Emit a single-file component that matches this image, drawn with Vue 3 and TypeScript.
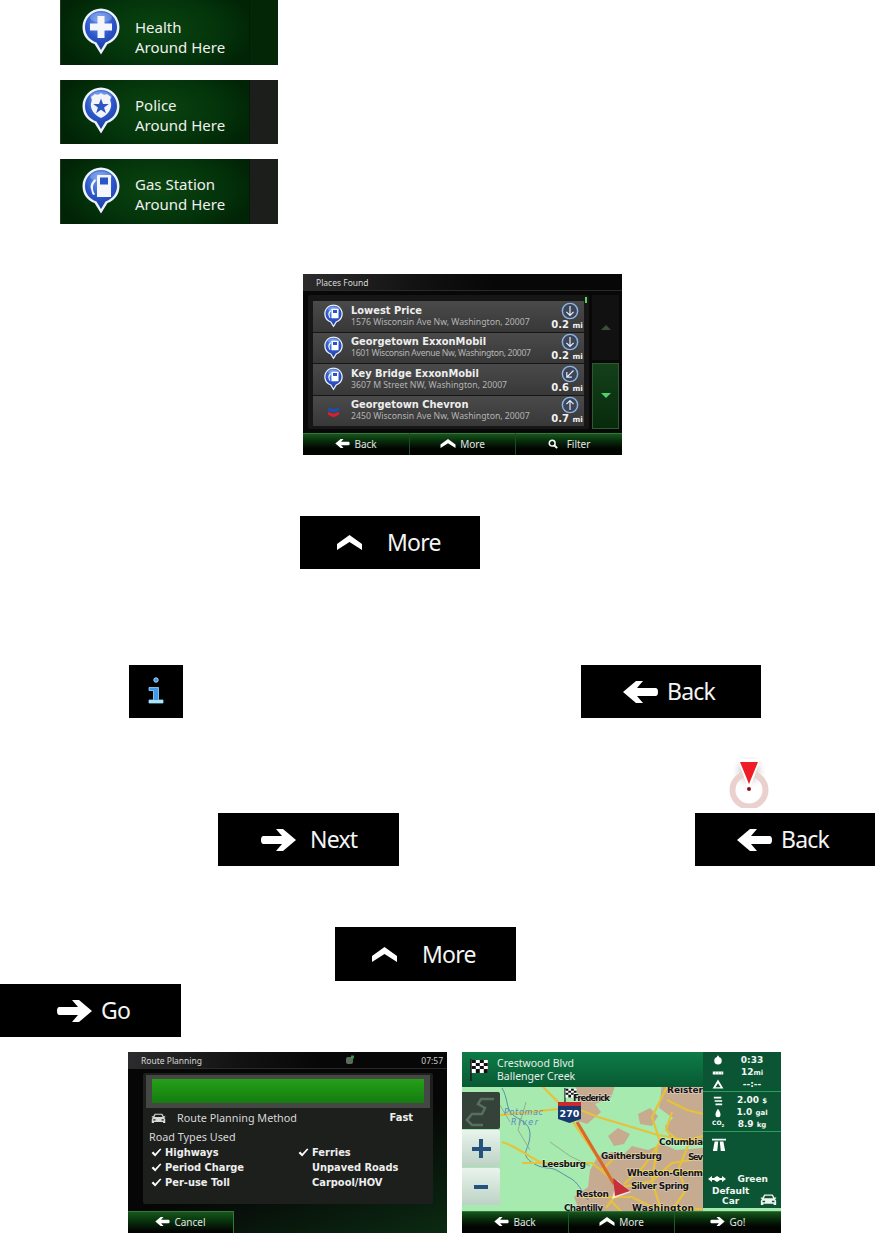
<script setup lang="ts">
interface Category {
  name: string
  glyph: 'health' | 'police' | 'gas'
  flat: boolean
}

interface Place {
  name: string
  address: string
  distance: string
  turn: number
  brand?: boolean
  tight?: boolean
}

const categories: Category[] = [
  { name: 'Health', glyph: 'health', flat: false },
  { name: 'Police', glyph: 'police', flat: true },
  { name: 'Gas Station', glyph: 'gas', flat: true }
]

const places: Place[] = [
  { name: 'Lowest Price', address: '1576 Wisconsin Ave Nw, Washington, 20007', distance: '0.2', turn: 180 },
  { name: 'Georgetown ExxonMobil', address: '1601 Wisconsin Avenue Nw, Washington, 20007', distance: '0.2', turn: 180, tight: true },
  { name: 'Key Bridge ExxonMobil', address: '3607 M Street NW, Washington, 20007', distance: '0.6', turn: 225 },
  { name: 'Georgetown Chevron', address: '2450 Wisconsin Ave Nw, Washington, 20007', distance: '0.7', turn: 0, brand: true }
]

const roadsLeft = [
  { label: 'Highways', on: true },
  { label: 'Period Charge', on: true },
  { label: 'Per-use Toll', on: true }
]

const roadsRight = [
  { label: 'Ferries', on: true },
  { label: 'Unpaved Roads', on: false },
  { label: 'Carpool/HOV', on: false }
]

const mapLabels = [
  { text: 'Frederick', x: 111, y: 49, w: 37 },
  { text: 'Reister', x: 205, y: 41, w: 36 },
  { text: 'Columbia', x: 197, y: 93, w: 44 },
  { text: 'Gaithersburg', x: 139, y: 107, w: 61 },
  { text: 'Sev', x: 226, y: 108, w: 15 },
  { text: 'Leesburg', x: 80, y: 115, w: 44 },
  { text: 'Wheaton-Glenm', x: 165, y: 124, w: 76 },
  { text: 'Silver Spring', x: 169, y: 137, w: 58 },
  { text: 'Reston', x: 114, y: 145, w: 33 },
  { text: 'Chantilly', x: 102, y: 159, w: 39 },
  { text: 'Washington', x: 170, y: 159, w: 62 }
]
</script>

<template>
  <div class="page">
    <svg class="defs" width="0" height="0" aria-hidden="true">
      <defs>
        <radialGradient id="pinBlue" cx="45%" cy="25%" r="80%">
          <stop offset="0" stop-color="#6a9af0" />
          <stop offset="0.55" stop-color="#2b55c8" />
          <stop offset="1" stop-color="#1b3a9e" />
        </radialGradient>
        <symbol id="pin" viewBox="0 0 38 47">
          <path d="M19 0.500C9 0.500 0.500 9 0.500 19c0 8.500 5 14.500 12 17l6.500 10.500L25.500 36c7-2.500 12-8.500 12-17C37.500 9 29 0.500 19 0.500z" fill="#eef3fb" />
          <path d="M19 3C10 3 3 10 3 19c0 7.500 4.500 13 11.500 15.500L19 42l4.500-7.500C30.500 32 35 26.500 35 19 35 10 28 3 19 3z" fill="url(#pinBlue)" />
          <ellipse cx="19" cy="9.500" rx="11" ry="5" fill="#fff" opacity="0.22" />
        </symbol>
        <symbol id="arrow-left" viewBox="0 0 35 22">
          <path d="M0 11 13 0h7l-6 7h18.500Q35 7 35 11t-2.500 4H14l6 7h-7z" fill="currentColor" />
        </symbol>
        <symbol id="arrow-right" viewBox="0 0 35 22">
          <path d="M35 11 22 0h-7l6 7H2.500Q0 7 0 11t2.500 4H21l-6 7h7z" fill="currentColor" />
        </symbol>
        <symbol id="chevron-up" viewBox="0 0 25 15">
          <path d="M12.500 0 25 9v6L12.500 7 0 15V9z" fill="currentColor" />
        </symbol>
        <symbol id="check" viewBox="0 0 12 10">
          <path d="M0.500 5.500 2.500 4 4.500 6.500 10 0.500 11.500 1.500 4.500 9.500z" fill="currentColor" />
        </symbol>
        <symbol id="car" viewBox="0 0 20 14">
          <path d="M1 4h2l2-3.500h10L17 4h2v1.500h-1.500L19 8v5h-3v-1.500H4V13H1V8l1.500-2.500H1zM6 2 4.500 5h11L14 2zM3 8v1.500h3V8zm11 0v1.500h3V8z" fill="currentColor" fill-rule="evenodd" />
        </symbol>
        <symbol id="flag" viewBox="0 0 18 22">
          <rect x="0" y="0" width="1.800" height="22" fill="#222" />
          <rect x="1.800" y="1" width="16" height="13" fill="#fff" />
          <path d="M1.800 1h4v3h-4zM9.800 1h4v3h-4zM5.800 4h4v3h-4zM13.800 4h4v3h-4zM1.800 7h4v3h-4zM9.800 7h4v3h-4zM5.800 10h4v4h-4zM13.800 10h4v4h-4z" fill="#111" />
        </symbol>
        <symbol id="pump" viewBox="0 0 38 47">
          <use href="#pin" />
          <path d="M16 9h12a1 1 0 0 1 1 1v18H15V10a1 1 0 0 1 1-1z" fill="#fff" />
          <rect x="18" y="11.500" width="8" height="6" fill="#2b55c4" />
          <path d="M13 12c-4 3-5 7-4 10s1 5 3 5l1-1c-2-2-2-4-2-6s1-4 3-6z" fill="#fff" />
        </symbol>
      </defs>
    </svg>

    <section class="category-list">
      <div v-for="c in categories" :key="c.name" class="category" :class="{ flat: c.flat }">
        <svg class="category-pin" viewBox="0 0 38 47">
          <use href="#pin" />
          <path v-if="c.glyph === 'health'" d="M15.500 8h7v7.500H30v7h-7.500V30h-7v-7.500H8v-7h7.500z" fill="#f4f6fb" />
          <g v-else-if="c.glyph === 'police'">
            <path d="M19 6c2 2 4 2 6 1l4 3c-1 2-1 4 0 6 1 6-3 12-10 15C12 28 8 22 9 16c1-2 1-4 0-6l4-3c2 1 4 1 6-1z" fill="#f2f4fa" />
            <path d="M19 11.500l2 5.500 5.800 0-4.700 3.500 1.800 5.700-4.900-3.500-4.900 3.500 1.800-5.700-4.700-3.500 5.800 0z" fill="#2b55c4" />
          </g>
          <g v-else>
            <path d="M16 8h12a1 1 0 0 1 1 1v21H15V9a1 1 0 0 1 1-1z" fill="#f4f6fb" />
            <rect x="18" y="10.500" width="8" height="7" fill="#2b55c4" />
            <path d="M13 12c-4 3-5 7-4 10s1 6 3 6l1-1c-2-2-2-5-2-7s1-4 3-6z" fill="#f4f6fb" />
          </g>
        </svg>
        <div class="category-text">
          <span>{{ c.name }}</span>
          <span>Around Here</span>
        </div>
        <div class="category-side"></div>
      </div>
    </section>

    <!-- Places Found screen -->
    <section class="screen places">
      <header class="screen-title"><span>Places Found</span></header>
      <div class="places-body">
        <div class="place-list">
          <div v-for="p in places" :key="p.name" class="place">
            <svg v-if="p.brand" class="place-icon" viewBox="0 0 38 47">
              <path d="M8 16l11 4 11-4v7l-11 4-11-4z" fill="#1d4fa8" />
              <path d="M8 25l11 4 11-4v6l-11 5-11-5z" fill="#d3212d" />
            </svg>
            <svg v-else class="place-icon" viewBox="0 0 38 47"><use href="#pump" /></svg>
            <div class="place-text">
              <div class="place-name">{{ p.name }}</div>
              <div class="place-address" :class="{ tight: p.tight }">{{ p.address }}</div>
            </div>
            <div class="place-side">
              <svg class="turn" viewBox="0 0 20 20" :style="{ transform: `rotate(${p.turn}deg)` }">
                <circle cx="10" cy="10" r="8.500" fill="#3c4658" stroke="#8fb4e8" stroke-width="1.600" />
                <path d="M10 15.500V5M6 9l4-4 4 4" fill="none" stroke="#e8eef8" stroke-width="1.300" />
              </svg>
              <div class="place-dist">{{ p.distance }} <small>mi</small></div>
            </div>
          </div>
          <i class="scroll-mark"></i>
        </div>
        <div class="scroller">
          <div class="scroll-btn"><i class="tri up"></i></div>
          <div class="scroll-btn active"><i class="tri down"></i></div>
        </div>
      </div>
      <footer class="toolbar">
        <div class="tool">
          <svg class="tool-arrow"><use href="#arrow-left" /></svg>Back
        </div>
        <div class="tool">
          <svg class="tool-chevron"><use href="#chevron-up" /></svg>More
        </div>
        <div class="tool">
          <svg class="tool-search" viewBox="0 0 12 12">
            <circle cx="5" cy="5" r="3.500" fill="none" stroke="currentColor" stroke-width="1.800" />
            <path d="M7.500 7.500 11 11" stroke="currentColor" stroke-width="2.200" />
          </svg>Filter
        </div>
      </footer>
    </section>

    <div class="btn btn-more more-a">
      <svg class="chevron"><use href="#chevron-up" /></svg><span>More</span>
    </div>

    <div class="row row-info">
      <div class="info-btn">
        <svg viewBox="0 0 54 53" width="54" height="53">
          <circle cx="27" cy="15" r="2.200" fill="#3f8fe0" stroke="#b4d8f6" stroke-width="1" />
          <path d="M20 22.500h9.500V35H34v3H20v-3h4.500V25.500H20z" fill="#3e9bec" stroke="#a6d4f7" stroke-width="0.800" />
          <path d="M20 35h14v3H20z" fill="#a8e6fc" />
        </svg>
      </div>
      <div class="btn btn-back">
        <svg class="arrow"><use href="#arrow-left" /></svg><span>Back</span>
      </div>
    </div>

    <svg class="cursor-pin" viewBox="0 0 47 51" width="47" height="51">
      <defs>
        <radialGradient id="pinShade" cx="50%" cy="45%" r="50%">
          <stop offset="0" stop-color="#9a9a9a" />
          <stop offset="1" stop-color="#ffffff" stop-opacity="0" />
        </radialGradient>
      </defs>
      <ellipse cx="24" cy="16" rx="19" ry="19" fill="url(#pinShade)" />
      <circle cx="24" cy="33" r="16.500" fill="none" stroke="#ebd0d0" stroke-width="6" />
      <path d="M13 3.500Q13 2 15 2h18q2 0 2 1.500L25 31h-2z" fill="#fff" />
      <path d="M15 5h18L24 27z" fill="#ee1c25" />
      <circle cx="24" cy="32" r="2" fill="#8e1016" />
    </svg>

    <div class="row row-next">
      <div class="btn btn-next">
        <svg class="arrow"><use href="#arrow-right" /></svg><span>Next</span>
      </div>
      <div class="btn btn-back">
        <svg class="arrow"><use href="#arrow-left" /></svg><span>Back</span>
      </div>
    </div>

    <div class="btn btn-more more-b">
      <svg class="chevron"><use href="#chevron-up" /></svg><span>More</span>
    </div>

    <div class="btn btn-go">
      <svg class="arrow"><use href="#arrow-right" /></svg><span>Go</span>
    </div>

    <section class="screens">
      <!-- Route Planning screen -->
      <div class="screen route">
        <header class="screen-title route-title">
          <span>Route Planning</span>
          <svg class="sat" viewBox="0 0 10 10">
            <rect x="1" y="2" width="7" height="7" rx="2" fill="#5d6b5d" />
            <rect x="6" y="0.500" width="3" height="3" fill="#2f9a4a" />
          </svg>
          <span class="clock">07:57</span>
        </header>
        <div class="route-panel">
          <div class="progress"><div class="progress-bar"></div></div>
          <div class="method">
            <svg class="method-car"><use href="#car" /></svg>
            <span>Route Planning Method</span>
            <b>Fast</b>
          </div>
          <div class="road-heading">Road Types Used</div>
          <div class="road-grid">
            <ul>
              <li v-for="r in roadsLeft" :key="r.label">
                <svg v-if="r.on" class="tick"><use href="#check" /></svg>{{ r.label }}
              </li>
            </ul>
            <ul>
              <li v-for="r in roadsRight" :key="r.label">
                <svg v-if="r.on" class="tick"><use href="#check" /></svg>{{ r.label }}
              </li>
            </ul>
          </div>
        </div>
        <footer class="route-foot">
          <div class="tool cancel">
            <svg class="tool-arrow"><use href="#arrow-left" /></svg>Cancel
          </div>
        </footer>
      </div>

      <!-- Map screen -->
      <div class="screen map">
        <svg class="map-canvas" viewBox="0 0 319 181" width="319" height="181">
          <rect width="319" height="181" fill="#a6eab0" />
          <g fill="#c6ab90">
            <path d="M113 34h40l-4 12-16 6 6 8-14 12-12-4 6-14z" />
            <path d="M200 32h41v60l-14 2-10-8-8 2-6-14 8-8-14-10z" />
            <path d="M128 118l8-14 14-4 12 2 8-8 16 4 14-6 14 6 27-2v85H100l4-18 12-8-4-10 14-10z" />
            <path d="M146 84l10-8 12 6-6 10-10 2z" />
            <path d="M176 62l12-6 8 8-6 10-12-2z" />
          </g>
          <g fill="none" stroke="#5b8fa3" stroke-width="1">
            <path d="M40 36c6 10 4 20 10 26s18 8 18 20-6 16-4 22 14 12 22 12 14 6 22 10 12 14 18 22" />
          </g>
          <g fill="none" stroke="#8f9f86" stroke-width="0.800">
            <path d="M30 40 48 70M64 50l-8 28 12 20M88 90l20 14 20 10" />
          </g>
          <g fill="none" stroke="#e6c23a" stroke-width="2.200">
            <path d="M30 64l66-7 10-4 30 12 60 18 45 8" />
            <path d="M80 34l20 20 44 64 10 16" />
            <path d="M205 35l-15 30 8 25-16 24-20 18" />
            <path d="M60 111h70l30 24 30-6 20-18 31-5" />
            <path d="M120 145h50l20 10 50 2" />
            <path d="M205 48l20 10 16 4" />
            <path d="M195 95l-5 34 8 26" />
            <path d="M40 90c14 4 22 12 40 21" />
            <path d="M160 135l-16 21M177 119h64" />
            <path d="M210 60l-6 18 14 12 23-6M226 94l-10 24 8 20-14 20" />
            <path d="M148 148l12 12M140 118l14-14 30-2" />
          </g>
          <path d="M115 70l37 62" fill="none" stroke="#d9692a" stroke-width="3.200" />
          <path d="M155 128l-5 19 19-7z" fill="#fff" opacity="0.7" />
          <path d="M151 126l2 18 15-5z" fill="#c6303a" />
          <use href="#flag" x="101" y="36" width="15" height="15" />
          <path d="M96 50h23v17l-11.500 4L96 67z" fill="#17396f" />
          <rect x="96" y="50" width="23" height="4" fill="#c8282e" />
          <text x="107.500" y="65" class="shield-text">270</text>
          <text x="42" y="63" class="water" textLength="39">Potomac</text>
          <text x="49" y="73" class="water" textLength="27">River</text>
          <text
            v-for="l in mapLabels"
            :key="l.text"
            :x="l.x"
            :y="l.y"
            :textLength="l.w"
            class="town"
          >{{ l.text }}</text>
        </svg>

        <header class="map-header">
          <svg class="map-flag"><use href="#flag" /></svg>
          <div class="map-street">
            <span>Crestwood Blvd</span>
            <span>Ballenger Creek</span>
          </div>
        </header>

        <div class="map-controls">
          <div class="map-ctl dark">
            <svg viewBox="0 0 36 36" width="36" height="36">
              <path d="M31 6H18l-3 5 7 4-3 6H9l-5 6 5 5h11" fill="none" stroke="#56705e" stroke-width="2.500" />
            </svg>
          </div>
          <div class="map-ctl light"><i class="plus"></i></div>
          <div class="map-ctl light"><i class="minus"></i></div>
        </div>

        <aside class="map-side">
          <div class="side-block">
            <div class="stat">
              <svg viewBox="0 0 12 12"><circle cx="6" cy="7" r="4.500" fill="#fff" /><path d="M6 1v3" stroke="#fff" stroke-width="2" /></svg>
              <b>0:33</b>
            </div>
            <div class="stat">
              <svg viewBox="0 0 16 12"><path d="M1 4h14v4H1z" fill="#fff" /><path d="M4 6h1M8 6h1M12 6h1" stroke="#0b5535" /></svg>
              <b>12<small>mi</small></b>
            </div>
            <div class="stat">
              <svg viewBox="0 0 14 12"><path d="M7 0.500 13.500 11.500h-13z" fill="#fff" /><path d="M4 10l3-5 3 5z" fill="#0b5535" /></svg>
              <b>--:--</b>
            </div>
          </div>
          <div class="side-block">
            <div class="stat">
              <svg viewBox="0 0 14 12"><path d="M2 1h9v2H2zM3 5h9v2H3zM4 9h8v2H4z" fill="#fff" /></svg>
              <b>2.00 <small>$</small></b>
            </div>
            <div class="stat">
              <svg viewBox="0 0 12 12"><path d="M6 1c2 3 3 5 3 7a3 3 0 0 1-6 0c0-2 1-4 3-7z" fill="#fff" /></svg>
              <b>1.0 <small>gal</small></b>
            </div>
            <div class="stat">
              <span class="co2">CO<sub>2</sub></span>
              <b>8.9 <small>kg</small></b>
            </div>
          </div>
          <div class="side-block last">
            <svg class="highway" viewBox="0 0 16 16">
              <path d="M0 2h16v2H0z" fill="#fff" />
              <path d="M3 5h4v1L6 16H1zM9 5h4l2 11h-5L9 6z" fill="#fff" />
            </svg>
            <div class="eco">
              <svg viewBox="0 0 18 8"><path d="M0 4l4-3v2h2l3-2 3 2h2V1l4 3-4 3V5h-2L9 7 6 5H4v2z" fill="#fff" /></svg>
              <b>Green</b>
            </div>
            <div class="vehicle">
              <b>Default<br />Car</b>
              <svg><use href="#car" /></svg>
            </div>
          </div>
        </aside>

        <footer class="toolbar map-toolbar">
          <div class="tool">
            <svg class="tool-arrow"><use href="#arrow-left" /></svg>Back
          </div>
          <div class="tool">
            <svg class="tool-chevron"><use href="#chevron-up" /></svg>More
          </div>
          <div class="tool">
            <svg class="tool-arrow"><use href="#arrow-right" /></svg>Go!
          </div>
        </footer>
      </div>
    </section>
  </div>
</template>

<style>
html,
body {
  margin: 0;
  background: #fff;
}
</style>

<style scoped>
.page {
  width: 875px;
  height: 1233px;
  overflow: hidden;
  background: #fff;
  font-family: 'Noto Sans', 'Open Sans', sans-serif;
  color: #fff;
}

.defs {
  position: absolute;
}

/* category tiles */
.category-list {
  display: flex;
  flex-direction: column;
  gap: 15px;
  padding-left: 60px;
}

.category {
  width: 218px;
  height: 65px;
  display: flex;
  align-items: center;
  background: radial-gradient(ellipse 100px 50px at 95px 30px, #0a4410 0%, #03320a 70%, #012406 100%);
  border-left: 1px solid #1a3d1c;
  box-sizing: border-box;
}

.category:nth-child(2) {
  height: 64px;
}

.category-pin {
  width: 38px;
  height: 47px;
  margin-left: 21px;
  flex-shrink: 0;
  margin-top: -3px;
}

.category-text {
  display: flex;
  flex-direction: column;
  margin-left: 15px;
  font-size: 15px;
  line-height: 20px;
  color: #f0f0ee;
  white-space: nowrap;
  margin-top: 9px;
  flex: 1;
}

.category.flat .category-text {
  margin-top: 5px;
}

.category-side {
  width: 28px;
  height: 100%;
  background: #032607;
  border-left: 1px solid #021c05;
  flex-shrink: 0;
}

.category.flat .category-side {
  background: #1b1e1b;
}

/* device screens */
.screen {
  position: relative;
  width: 319px;
  height: 181px;
  overflow: hidden;
  background: #070807;
}

.screen-title {
  height: 17px;
  display: flex;
  align-items: center;
  padding: 0 13px;
  font-size: 8.500px;
  color: #d8d8d8;
  background: linear-gradient(100deg, #2c2c2c 0%, #121212 35%, #070707 60%);
  border-bottom: 1px solid #2a2a2a;
  box-sizing: border-box;
}

.places {
  margin: 50px 0 0 303px;
}

.places-body {
  display: flex;
  padding: 4px 3px 3px 5px;
  height: 141px;
  box-sizing: border-box;
  gap: 3px;
}

.place-list {
  position: relative;
  flex: 1;
  padding: 6px 5px 3px;
  background: #151615;
  display: flex;
  flex-direction: column;
  gap: 1px;
  border-radius: 2px;
}

.place {
  flex: 1;
  display: flex;
  align-items: center;
  background: linear-gradient(#4a4a4a, #383838);
  padding-right: 2px;
}

.place-icon {
  width: 19px;
  height: 24px;
  margin-left: 11px;
  flex-shrink: 0;
}

.place-text {
  margin-left: 8px;
  flex: 1;
  white-space: nowrap;
  min-width: 0;
}

.place-name {
  font-family: 'DejaVu Sans', sans-serif;
  font-weight: 700;
  font-size: 9.900px;
  line-height: 12px;
  color: #eee;
}

.place-address {
  font-size: 8.700px;
  line-height: 11px;
  color: #b4b4b4;
}

.place-address.tight {
  letter-spacing: -0.340px;
}

.place-side {
  width: 32px;
  display: flex;
  flex-direction: column;
  align-items: center;
  margin-right: -1px;
  margin-left: -20px;
}

.turn {
  width: 18px;
  height: 18px;
  margin-left: 6px;
}

.place-dist {
  font-family: 'DejaVu Sans', sans-serif;
  font-weight: 700;
  font-size: 10px;
  line-height: 10px;
  color: #f2f2f2;
  white-space: nowrap;
}

.place-dist small {
  font-size: 7.500px;
}

.scroll-mark {
  position: absolute;
  right: 2px;
  top: 2px;
  width: 2px;
  height: 6px;
  background: #5fd05a;
}

.scroller {
  width: 27px;
  display: flex;
  flex-direction: column;
  gap: 3px;
}

.scroll-btn {
  flex: 1;
  display: flex;
  align-items: center;
  justify-content: center;
  background: #111;
}

.scroll-btn.active {
  background: linear-gradient(#14401a, #082a0c);
  border: 1px solid #2d5a30;
}

.tri {
  width: 0;
  height: 0;
  border-left: 5px solid transparent;
  border-right: 5px solid transparent;
}

.tri.up {
  border-bottom: 5px solid #3a4f3d;
}

.tri.down {
  border-top: 5px solid #4fd06a;
}

.toolbar {
  position: absolute;
  left: 0;
  right: 0;
  bottom: 0;
  height: 22px;
  display: grid;
  grid-template-columns: 106px 105px 1fr;
  gap: 1px;
  background: #1e4a22;
}

.tool {
  display: flex;
  align-items: center;
  justify-content: center;
  gap: 4px;
  padding-bottom: 2px;
  font-size: 10px;
  color: #e4e4e4;
  background: linear-gradient(#17561d 0%, #072b0b 35%, #020402 70%);
  border-top: 1px solid #2f7a36;
  box-sizing: border-box;
}

.tool-arrow {
  width: 15px;
  height: 9px;
  color: #fff;
}

.tool-chevron {
  width: 16px;
  height: 9px;
  color: #fff;
}

.tool-search {
  width: 10px;
  height: 10px;
  margin-right: 5px;
  color: #fff;
}

/* black buttons */
.btn {
  width: 180px;
  height: 53px;
  display: flex;
  align-items: center;
  background: #000;
  font-size: 23px;
  letter-spacing: -0.8px;
  color: #f4f4f4;
  box-sizing: border-box;
  flex-shrink: 0;
}

.btn span {
  margin-top: -1px;
}

.chevron {
  width: 25px;
  height: 15px;
  color: #fff;
  margin-right: 25px;
}

.arrow {
  width: 35px;
  height: 22px;
  color: #fff;
}

.btn-more {
  padding-left: 37px;
}

.more-a {
  margin: 61px 0 0 300px;
}

.more-b {
  width: 181px;
  height: 54px;
  margin: 61px 0 0 335px;
}

.btn-back {
  padding-left: 42px;
}

.btn-back .arrow {
  margin-right: 9px;
}

.btn-next {
  width: 181px;
  padding-left: 43px;
}

.btn-next .arrow {
  margin-right: 14px;
}

.btn-go {
  width: 181px;
  margin-top: 3px;
  padding-left: 57px;
}

.btn-go .arrow {
  margin-right: 9px;
}

.row {
  display: flex;
  align-items: flex-start;
}

.row-info {
  margin-top: 96px;
  padding-left: 129px;
}

.info-btn {
  width: 54px;
  height: 53px;
  background: #000;
  margin-right: 398px;
  flex-shrink: 0;
}

.info-btn svg {
  display: block;
}

.cursor-pin {
  display: block;
  margin: 39px 0 0 725px;
}

.row-next {
  margin-top: 5px;
  padding-left: 218px;
}

.row-next .btn-next {
  margin-right: 296px;
}

/* bottom screenshots */
.screens {
  display: flex;
  gap: 15px;
  margin: 15px 0 0 128px;
}

.route {
  background: linear-gradient(160deg, #060606 55%, #0b2a12 100%);
}

.route-title {
  justify-content: space-between;
  padding-right: 4px;
}

.sat {
  width: 10px;
  height: 10px;
  margin-left: 76px;
}

.clock {
  color: #ccc;
}

.route-panel {
  margin: 4px 14px 0 15px;
  height: 131px;
  padding: 2px 3px 0;
  background: #1d1f1d;
  border-radius: 2px;
  box-sizing: border-box;
}

.progress {
  height: 33px;
  padding: 4px 6px;
  background: #454745;
  box-sizing: border-box;
}

.progress-bar {
  height: 24px;
  background: linear-gradient(#25a01a, #137c0f);
}

.method {
  display: flex;
  align-items: center;
  margin-top: 2px;
  padding-left: 5px;
  font-size: 10.800px;
  line-height: 16px;
  color: #d8d8d8;
}

.method-car {
  width: 15px;
  height: 11px;
  color: #d8d8d8;
  margin-right: 11px;
}

.method b {
  font-family: 'DejaVu Sans', sans-serif;
  font-size: 9.900px;
  margin-left: auto;
  margin-right: 17px;
  color: #eee;
}

.road-heading {
  margin-top: 3px;
  padding-left: 3px;
  font-size: 10.800px;
  line-height: 16px;
  color: #d8d8d8;
}

.road-grid {
  display: grid;
  grid-template-columns: 147px 1fr;
  padding-left: 4px;
  margin-top: 0;
}

.road-grid ul {
  list-style: none;
  margin: 0;
  padding: 0 0 0 15px;
}

.road-grid li {
  position: relative;
  font-family: 'DejaVu Sans', sans-serif;
  font-weight: 700;
  font-size: 9.900px;
  line-height: 15px;
  color: #eee;
  white-space: nowrap;
}

.tick {
  position: absolute;
  left: -14px;
  top: 3px;
  width: 11px;
  height: 9px;
  color: #fff;
}

.route-foot {
  position: absolute;
  left: 0;
  bottom: 0;
  width: 106px;
  height: 22px;
  display: flex;
}

.cancel {
  flex: 1;
  background: linear-gradient(#17561d 0%, #0a3a10 35%, #020402 90%);
  border: 1px solid #2f7a36;
  border-width: 1px 1px 0 0;
}

.map-canvas {
  position: absolute;
  inset: 0;
  display: block;
}

.town {
  font-family: 'DejaVu Sans', sans-serif;
  font-weight: 700;
  font-size: 9px;
  fill: #151515;
  paint-order: stroke;
  stroke: rgba(255, 255, 255, 0.35);
  stroke-width: 1.500px;
}

.water {
  font-family: 'DejaVu Sans', sans-serif;
  font-style: italic;
  font-size: 8px;
  fill: #5a86c0;
}

.shield-text {
  font-family: 'DejaVu Sans', sans-serif;
  font-weight: 700;
  font-size: 9.500px;
  fill: #fff;
  text-anchor: middle;
}

.map-header {
  position: absolute;
  left: 0;
  top: 0;
  width: 241px;
  height: 35px;
  display: flex;
  align-items: center;
  background: linear-gradient(#0e7c47, #085a33);
}

.map-flag {
  width: 18px;
  height: 22px;
  margin-left: 8px;
}

.map-street {
  display: flex;
  flex-direction: column;
  margin-left: 9px;
  font-size: 10.500px;
  line-height: 13px;
  color: #e6efe8;
  white-space: nowrap;
}

.map-controls {
  position: absolute;
  left: 0;
  top: 40px;
  display: flex;
  flex-direction: column;
  gap: 1px;
}

.map-ctl {
  position: relative;
  width: 38px;
  height: 37px;
  display: flex;
  align-items: center;
  justify-content: center;
  border-radius: 0 2px 2px 0;
}

.map-ctl.dark {
  background: #35423a;
}

.map-ctl.light {
  background: linear-gradient(#e9f4ec, #bcd2c4);
}

.plus,
.minus {
  position: relative;
  width: 19px;
  height: 4px;
  background: #24517e;
}

.minus {
  width: 14px;
}

.plus::after {
  content: '';
  position: absolute;
  left: 7.500px;
  top: -7.500px;
  width: 4px;
  height: 19px;
  background: #24517e;
}

.map-side {
  position: absolute;
  right: 0;
  top: 0;
  width: 78px;
  height: 156px;
  display: flex;
  flex-direction: column;
  gap: 1px;
  background: #27a05e;
}

.side-block {
  height: 39px;
  padding: 2px 3px 1px 9px;
  background: #0b5535;
  display: flex;
  flex-direction: column;
  justify-content: space-around;
  box-sizing: border-box;
}

.side-block.last {
  flex: 1;
  justify-content: flex-start;
  padding-left: 5px;
}

.stat {
  display: grid;
  grid-template-columns: 14px 1fr;
  align-items: center;
  height: 12px;
}

.stat svg {
  width: 12px;
  height: 10px;
}

.stat b,
.eco b,
.vehicle b {
  font-family: 'DejaVu Sans', sans-serif;
  font-weight: 700;
  font-size: 9px;
  line-height: 12px;
  color: #f2f6f2;
  text-align: center;
  white-space: nowrap;
}

.stat small {
  font-size: 7px;
}

.co2 {
  font-family: 'DejaVu Sans', sans-serif;
  font-weight: 700;
  font-size: 6px;
  line-height: 10px;
}

.co2 sub {
  font-size: 4px;
}

.highway {
  width: 14px;
  height: 14px;
  margin: 3px 0 0 4px;
}

.eco {
  display: flex;
  align-items: center;
  justify-content: space-between;
  margin-top: 22px;
  padding-right: 10px;
}

.eco svg {
  width: 18px;
  height: 8px;
}

.vehicle {
  display: flex;
  align-items: flex-end;
  justify-content: space-between;
  margin-top: 1px;
  padding-left: 4px;
}

.vehicle b {
  line-height: 10px;
  display: block;
  text-align: center;
}

.vehicle svg {
  width: 17px;
  height: 12px;
  color: #eef4ee;
  margin-right: 1px;
}

.map-toolbar {
  background: #1f5a2b;
}
</style>
